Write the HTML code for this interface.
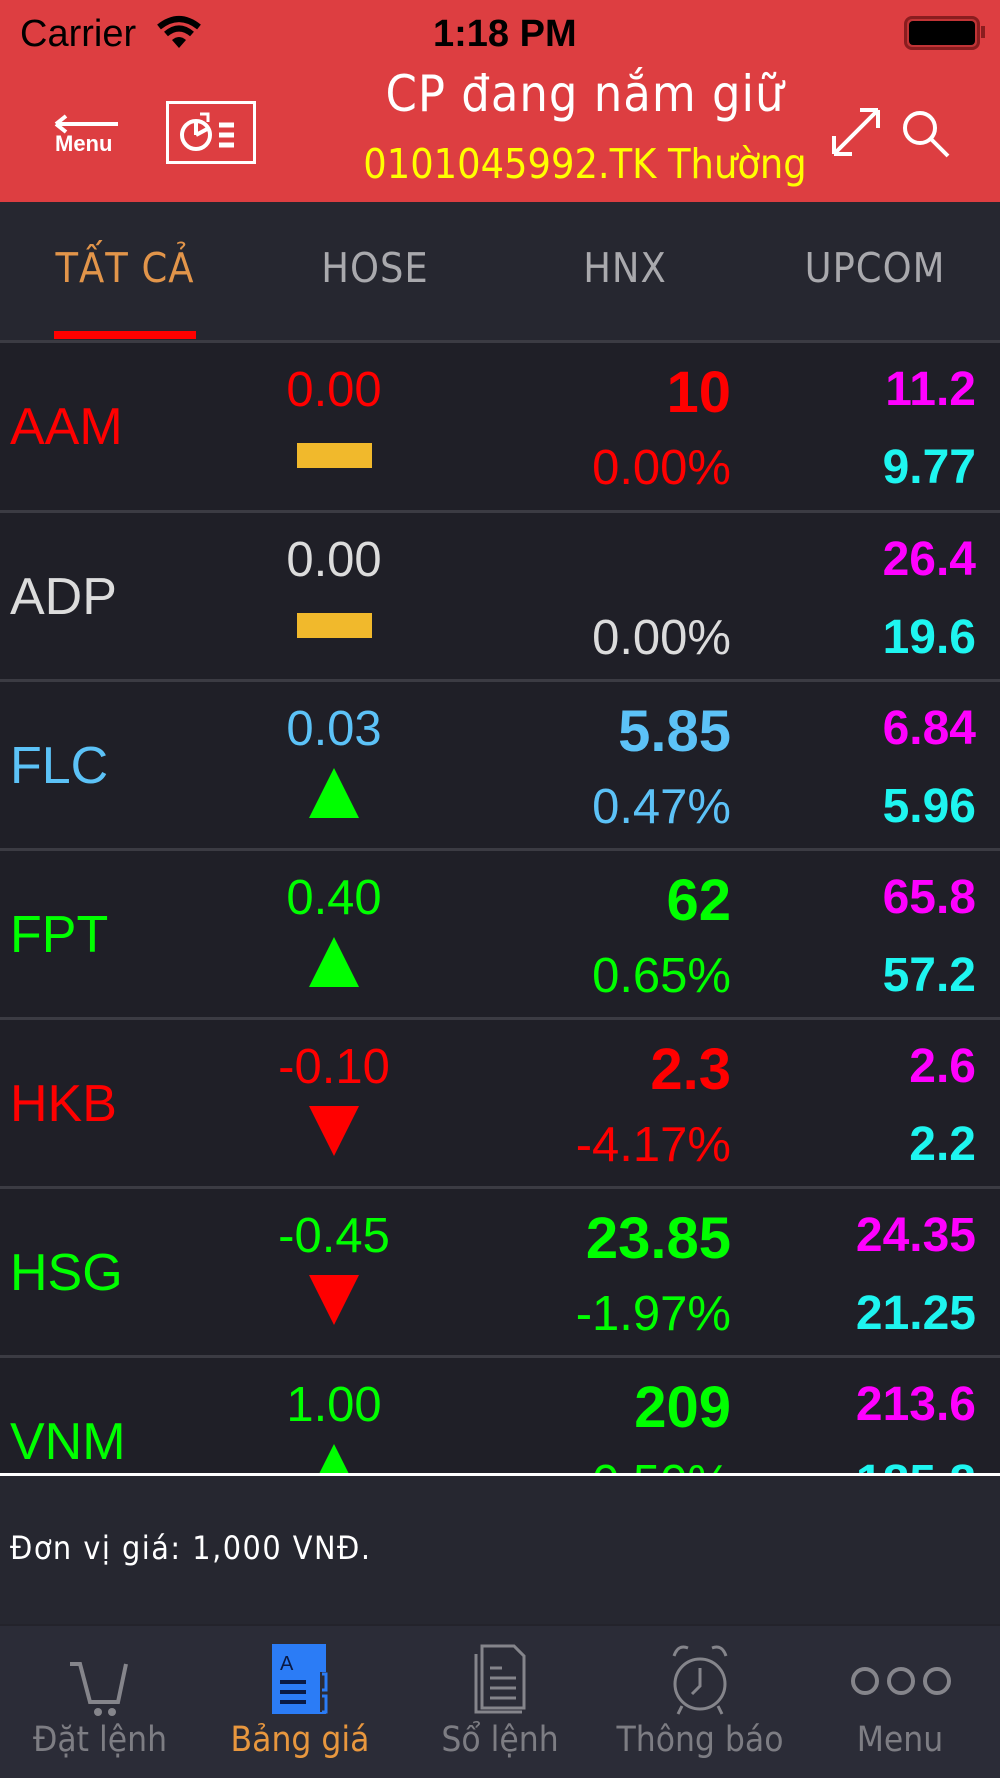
<!DOCTYPE html>
<html><head><meta charset="utf-8">
<style>
*{margin:0;padding:0;box-sizing:border-box}
body{width:1000px;height:1778px;overflow:hidden;background:#1f1f27;font-family:"Liberation Sans",sans-serif;position:relative}
.a{position:absolute;white-space:nowrap}
.hdr{position:absolute;left:0;top:0;width:1000px;height:202px;background:#dd3e41}
.tabs{position:absolute;left:0;top:202px;width:1000px;height:138px;background:#262730}
.tab{position:absolute;top:245px;width:250px;text-align:center;font-size:41px;color:#a9a9ad;line-height:46px;font-family:"DejaVu Sans Condensed","Liberation Sans",sans-serif;font-weight:300;letter-spacing:1px}
.list{position:absolute;left:0;top:340px;width:1000px;height:1134px;overflow:hidden}
.row{position:absolute;left:0;width:1000px;height:169px;border-top:3px solid #3b3b43}
.sym{position:absolute;left:10px;top:58px;font-size:52px;line-height:52px}
.chg{position:absolute;left:234px;width:200px;text-align:center;top:22px;font-size:49px;line-height:50px}
.pr{position:absolute;right:269px;top:21px;font-size:58px;line-height:58px;font-weight:bold}
.pc{position:absolute;right:269px;top:100px;font-size:49px;line-height:50px}
.hi{position:absolute;right:24px;top:22px;font-size:48px;line-height:50px;font-weight:bold;color:#ff00ff}
.lo{position:absolute;right:24px;top:100px;font-size:48px;line-height:50px;font-weight:bold;color:#1ef5f0}
.dash{position:absolute;left:297px;top:100px;width:75px;height:25px;background:#f1b92c}
.up{position:absolute;left:309px;top:86px;width:0;height:0;border-left:25px solid transparent;border-right:25px solid transparent;border-bottom:50px solid #00ff00}
.dn{position:absolute;left:309px;top:86px;width:0;height:0;border-left:25px solid transparent;border-right:25px solid transparent;border-top:50px solid #ff0000}
.r{color:#ff0000}.w{color:#dcdcdc}.b{color:#5cc2f7}.g{color:#00ff00}
.tb{position:absolute;top:1624px;width:200px;height:154px;text-align:center}
.tb span{position:absolute;left:0;width:200px;top:96px;font-size:35px;color:#7d7d83;font-family:"DejaVu Sans Condensed","Liberation Sans",sans-serif}
</style></head><body>
<div class="hdr"></div>
<div class="a" style="left:20px;top:13px;font-size:38px;color:#000">Carrier</div>
<svg class="a" style="left:156px;top:15px" width="46" height="34" viewBox="0 0 46 34"><path d="M3 12 Q23 -4 43 12" stroke="#000" stroke-width="6" fill="none"/><path d="M10 19 Q23 8 36 19" stroke="#000" stroke-width="6" fill="none"/><path d="M16 25 L23 33 L30 25 Q23 19 16 25Z" fill="#000"/></svg>
<div class="a" style="left:433px;top:13px;font-size:38px;font-weight:bold;color:#000">1:18 PM</div>
<div class="a" style="left:904px;top:16px;width:76px;height:34px;border:3px solid #8a1d1f;border-radius:8px;background:#c13436"></div>
<div class="a" style="left:909px;top:21px;width:66px;height:24px;background:#000;border-radius:4px"></div>
<div class="a" style="left:981px;top:26px;width:4px;height:12px;background:#8a1d1f"></div>
<svg class="a" style="left:52px;top:112px" width="70" height="30"><path d="M4 12 H66 M4 12 L14 4 M4 12 L14 20" stroke="#fff" stroke-width="4" fill="none"/></svg>
<div class="a" style="left:55px;top:131px;font-size:22px;font-weight:bold;color:#fff">Menu</div>
<div class="a" style="left:166px;top:101px;width:90px;height:63px;border:3px solid #fff"></div>
<svg class="a" style="left:176px;top:108px" width="72" height="48"><circle cx="20" cy="27" r="14" stroke="#fff" stroke-width="4" fill="none"/><path d="M20 27 L20 13 M20 27 L33 20" stroke="#fff" stroke-width="4"/><path d="M24 6 L32 6 L32 14" stroke="#fff" stroke-width="3" fill="none"/><path d="M43 17 H58 M43 27 H58 M43 37 H58" stroke="#fff" stroke-width="5"/></svg>
<div class="a" style="left:300px;top:65px;width:570px;text-align:center;font-size:50px;color:#fff;font-family:'DejaVu Sans Condensed','Liberation Sans',sans-serif;font-weight:300;letter-spacing:1px">CP đang nắm giữ</div>
<div class="a" style="left:300px;top:140px;width:570px;text-align:center;font-size:41px;color:#ffff00;font-family:'DejaVu Sans Condensed','Liberation Sans',sans-serif">0101045992.TK Thường</div>
<svg class="a" style="left:828px;top:106px" width="56" height="52"><path d="M6 48 L50 4 M6 48 V30 M6 48 H24 M50 4 H32 M50 4 V22" stroke="#fff" stroke-width="4" fill="none"/></svg>
<svg class="a" style="left:900px;top:108px" width="52" height="52"><circle cx="20" cy="20" r="15" stroke="#fff" stroke-width="4" fill="none"/><path d="M31 31 L48 48" stroke="#fff" stroke-width="4"/></svg>
<div class="tabs"></div>
<div class="tab" style="left:0;color:#e2954a">TẤT CẢ</div>
<div class="tab" style="left:250px">HOSE</div>
<div class="tab" style="left:500px">HNX</div>
<div class="tab" style="left:750px">UPCOM</div>
<div class="a" style="left:54px;top:331px;width:142px;height:8px;background:#ff0000"></div>
<div class="list">
<div class="row" style="top:0"><div class="sym r">AAM</div><div class="chg r">0.00</div><div class="dash"></div><div class="pr r">10</div><div class="pc r">0.00%</div><div class="hi">11.2</div><div class="lo">9.77</div></div>
<div class="row" style="top:170px"><div class="sym w">ADP</div><div class="chg w">0.00</div><div class="dash"></div><div class="pc w">0.00%</div><div class="hi">26.4</div><div class="lo">19.6</div></div>
<div class="row" style="top:339px"><div class="sym b">FLC</div><div class="chg b">0.03</div><div class="up"></div><div class="pr b">5.85</div><div class="pc b">0.47%</div><div class="hi">6.84</div><div class="lo">5.96</div></div>
<div class="row" style="top:508px"><div class="sym g">FPT</div><div class="chg g">0.40</div><div class="up"></div><div class="pr g">62</div><div class="pc g">0.65%</div><div class="hi">65.8</div><div class="lo">57.2</div></div>
<div class="row" style="top:677px"><div class="sym r">HKB</div><div class="chg r">-0.10</div><div class="dn"></div><div class="pr r">2.3</div><div class="pc r">-4.17%</div><div class="hi">2.6</div><div class="lo">2.2</div></div>
<div class="row" style="top:846px"><div class="sym g">HSG</div><div class="chg g">-0.45</div><div class="dn"></div><div class="pr g">23.85</div><div class="pc g">-1.97%</div><div class="hi">24.35</div><div class="lo">21.25</div></div>
<div class="row" style="top:1015px"><div class="sym g">VNM</div><div class="chg g">1.00</div><div class="up"></div><div class="pr g">209</div><div class="pc g">0.50%</div><div class="hi">213.6</div><div class="lo">185.8</div></div>
</div>
<div class="a" style="left:0;top:1473px;width:1000px;height:3px;background:#fff"></div>
<div class="a" style="left:0;top:1476px;width:1000px;height:148px;background:#262730"></div>
<div class="a" style="left:10px;top:1529px;font-size:32px;color:#fff;font-family:'DejaVu Sans Condensed','Liberation Sans',sans-serif;letter-spacing:1.5px">Đơn vị giá: 1,000 VNĐ.</div>
<div class="a" style="left:0;top:1624px;width:1000px;height:154px;background:#2b2c37;border-top:2px solid #23232b"></div>
<div class="tb" style="left:0"><svg style="position:absolute;left:68px;top:30px" width="66" height="66"><path d="M2 10 H12 L22 48 H50 L58 10" stroke="#85858b" stroke-width="4" fill="none"/><circle cx="30" cy="58" r="4" fill="#85858b"/><circle cx="44" cy="58" r="4" fill="#85858b"/></svg><span>Đặt lệnh</span></div>
<div class="tb" style="left:200px"><svg style="position:absolute;left:70px;top:18px" width="60" height="74"><rect x="2" y="2" width="54" height="70" fill="#2b7cf6"/><rect x="50" y="30" width="8" height="40" fill="#2b2c37"/><path d="M52 32 H56 V48 H52 M52 54 H56 V70 H52" stroke="#2b7cf6" stroke-width="3" fill="none"/><text x="10" y="28" font-size="20" fill="#0a1a44" font-family="Liberation Sans">A</text><path d="M10 40 H36 M10 50 H36 M10 60 H36" stroke="#0a1a44" stroke-width="4"/></svg><span style="color:#e8973e">Bảng giá</span></div>
<div class="tb" style="left:400px"><svg style="position:absolute;left:70px;top:18px" width="60" height="74"><path d="M6 12 V70 H52" stroke="#85858b" stroke-width="3" fill="none"/><path d="M12 4 H44 L54 14 V66 H12 Z" stroke="#85858b" stroke-width="3" fill="none"/><path d="M20 26 H32 M20 36 H46 M20 46 H46 M20 56 H46" stroke="#85858b" stroke-width="3"/></svg><span>Sổ lệnh</span></div>
<div class="tb" style="left:600px"><svg style="position:absolute;left:70px;top:18px" width="60" height="74"><circle cx="30" cy="42" r="25" stroke="#85858b" stroke-width="3" fill="none"/><path d="M30 26 V44 L22 52" stroke="#85858b" stroke-width="3" fill="none"/><path d="M4 14 Q8 2 18 6 M56 14 Q52 2 42 6 M12 64 L8 72 M48 64 L52 72" stroke="#85858b" stroke-width="3" fill="none"/></svg><span>Thông báo</span></div>
<div class="tb" style="left:800px"><svg style="position:absolute;left:48px;top:40px" width="106" height="34"><circle cx="17" cy="17" r="12" stroke="#85858b" stroke-width="4" fill="none"/><circle cx="53" cy="17" r="12" stroke="#85858b" stroke-width="4" fill="none"/><circle cx="89" cy="17" r="12" stroke="#85858b" stroke-width="4" fill="none"/></svg><span>Menu</span></div>
</body></html>
